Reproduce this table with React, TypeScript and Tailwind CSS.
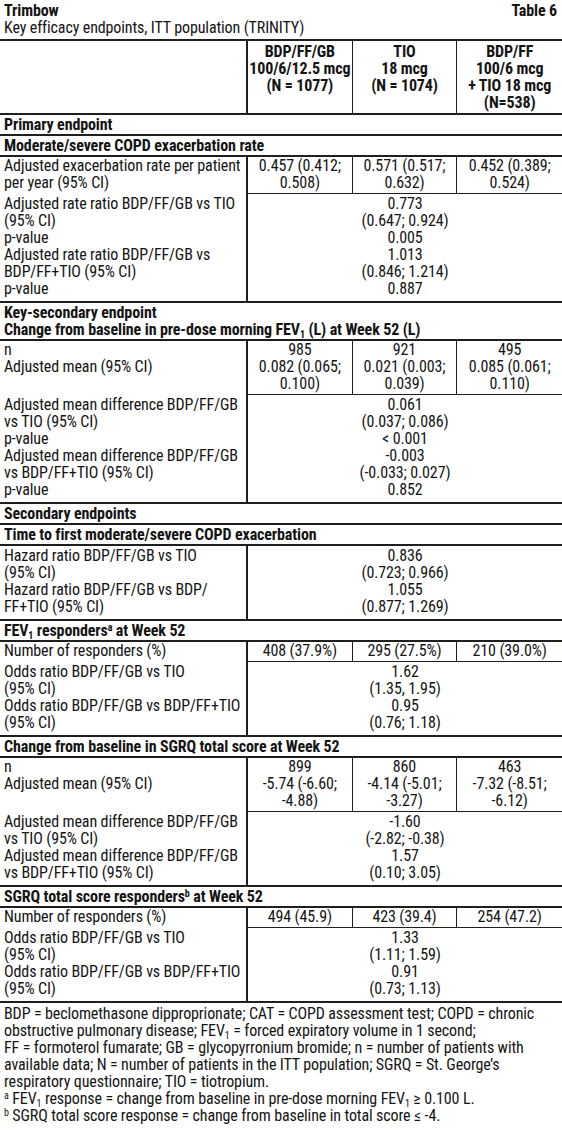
import React from "react";

type Split = { left: React.ReactNode[]; vals: React.ReactNode[][] };
type Merged = { left: React.ReactNode[]; center: React.ReactNode[] };
type Block =
  | { kind: "heading"; lines: React.ReactNode[] }
  | { kind: "data"; split?: Split; merged?: Merged };

const Sub = ({ children }: { children: React.ReactNode }) => (
  <sub className="text-[10px]">{children}</sub>
);
const Sup = ({ children }: { children: React.ReactNode }) => (
  <sup className="text-[10px]">{children}</sup>
);

const FEV = () => (
  <>
    FEV<Sub>1</Sub>
  </>
);

const blocks: Block[] = [
  { kind: "heading", lines: ["Primary endpoint"] },
  { kind: "heading", lines: ["Moderate/severe COPD exacerbation rate"] },
  {
    kind: "data",
    split: {
      left: ["Adjusted exacerbation rate per patient", "per year (95% CI)"],
      vals: [
        ["0.457 (0.412;", "0.508)"],
        ["0.571 (0.517;", "0.632)"],
        ["0.452 (0.389;", "0.524)"],
      ],
    },
    merged: {
      left: [
        "Adjusted rate ratio BDP/FF/GB vs TIO",
        "(95% CI)",
        "p-value",
        "Adjusted rate ratio BDP/FF/GB vs",
        "BDP/FF+TIO (95% CI)",
        "p-value",
      ],
      center: ["0.773", "(0.647; 0.924)", "0.005", "1.013", "(0.846; 1.214)", "0.887"],
    },
  },
  {
    kind: "heading",
    lines: [
      "Key-secondary endpoint",
      <>
        Change from baseline in pre-dose morning <FEV /> (L) at Week 52 (L)
      </>,
    ],
  },
  {
    kind: "data",
    split: {
      left: ["n", "Adjusted mean (95% CI)"],
      vals: [
        ["985", "0.082 (0.065;", "0.100)"],
        ["921", "0.021 (0.003;", "0.039)"],
        ["495", "0.085 (0.061;", "0.110)"],
      ],
    },
    merged: {
      left: [
        "Adjusted mean difference BDP/FF/GB",
        "vs TIO (95% CI)",
        "p-value",
        "Adjusted mean difference BDP/FF/GB",
        "vs BDP/FF+TIO (95% CI)",
        "p-value",
      ],
      center: ["0.061", "(0.037; 0.086)", "< 0.001", "-0.003", "(-0.033; 0.027)", "0.852"],
    },
  },
  { kind: "heading", lines: ["Secondary endpoints"] },
  { kind: "heading", lines: ["Time to first moderate/severe COPD exacerbation"] },
  {
    kind: "data",
    merged: {
      left: [
        "Hazard ratio BDP/FF/GB vs TIO",
        "(95% CI)",
        "Hazard ratio BDP/FF/GB vs BDP/",
        "FF+TIO (95% CI)",
      ],
      center: ["0.836", "(0.723; 0.966)", "1.055", "(0.877; 1.269)"],
    },
  },
  {
    kind: "heading",
    lines: [
      <>
        <FEV /> responders<Sup>a</Sup> at Week 52
      </>,
    ],
  },
  {
    kind: "data",
    split: {
      left: ["Number of responders (%)"],
      vals: [["408 (37.9%)"], ["295 (27.5%)"], ["210 (39.0%)"]],
    },
    merged: {
      left: [
        "Odds ratio BDP/FF/GB vs TIO",
        "(95% CI)",
        "Odds ratio BDP/FF/GB vs BDP/FF+TIO",
        "(95% CI)",
      ],
      center: ["1.62", "(1.35, 1.95)", "0.95", "(0.76; 1.18)"],
    },
  },
  { kind: "heading", lines: ["Change from baseline in SGRQ total score at Week 52"] },
  {
    kind: "data",
    split: {
      left: ["n", "Adjusted mean (95% CI)"],
      vals: [
        ["899", "-5.74 (-6.60;", "-4.88)"],
        ["860", "-4.14 (-5.01;", "-3.27)"],
        ["463", "-7.32 (-8.51;", "-6.12)"],
      ],
    },
    merged: {
      left: [
        "Adjusted mean difference BDP/FF/GB",
        "vs TIO (95% CI)",
        "Adjusted mean difference BDP/FF/GB",
        "vs BDP/FF+TIO (95% CI)",
      ],
      center: ["-1.60", "(-2.82; -0.38)", "1.57", "(0.10; 3.05)"],
    },
  },
  {
    kind: "heading",
    lines: [
      <>
        SGRQ total score responders<Sup>b</Sup> at Week 52
      </>,
    ],
  },
  {
    kind: "data",
    split: {
      left: ["Number of responders (%)"],
      vals: [["494 (45.9)"], ["423 (39.4)"], ["254 (47.2)"]],
    },
    merged: {
      left: [
        "Odds ratio BDP/FF/GB vs TIO",
        "(95% CI)",
        "Odds ratio BDP/FF/GB vs BDP/FF+TIO",
        "(95% CI)",
      ],
      center: ["1.33", "(1.11; 1.59)", "0.91", "(0.73; 1.13)"],
    },
  },
];

function Lines({ lines }: { lines: React.ReactNode[] }) {
  return (
    <>
      {lines.map((l, i) => (
        <div key={i} className="whitespace-nowrap">
          {l}
        </div>
      ))}
    </>
  );
}

function DataBlock({ split, merged }: { split?: Split; merged?: Merged }) {
  return (
    <div className="border-t-2 border-[#1f1f1f]">
      {split && (
        <div className="flex">
          <div className="w-[248px] shrink-0 border-r-2 border-[#1f1f1f] pb-[2px] pl-[4px]">
            <Lines lines={split.left} />
          </div>
          <div className="grid flex-1 grid-cols-3 border-b border-[#1f1f1f]">
            {split.vals.map((v, i) => (
              <div
                key={i}
                className={
                  i < 2
                    ? "border-r border-[#1f1f1f] pb-[2px] text-center"
                    : "pb-[2px] text-center"
                }
              >
                <Lines lines={v} />
              </div>
            ))}
          </div>
        </div>
      )}
      {merged && (
        <div className="flex">
          <div className="w-[248px] shrink-0 border-r-2 border-[#1f1f1f] pb-[4px] pl-[4px] pt-[1px]">
            <Lines lines={merged.left} />
          </div>
          <div className="flex-1 pb-[4px] pt-[1px] text-center">
            <Lines lines={merged.center} />
          </div>
        </div>
      )}
    </div>
  );
}

export default function App() {
  return (
    <div className="w-[562px] bg-white font-['Roboto_Condensed','Liberation_Sans',sans-serif] text-[16px] leading-[17px] tracking-[-0.12px] text-[#141414]">
      <div className="pt-[2px]">
        <div className="flex justify-between pl-[4px] pr-[5px] font-bold">
          <span>Trimbow</span>
          <span>Table 6</span>
        </div>
        <div className="pl-[4px]">Key efficacy endpoints, ITT population (TRINITY)</div>
      </div>
      <div className="mt-[3px] border-b-2 border-[#1f1f1f]">
        <div className="flex border-t-2 border-[#1f1f1f]">
          <div className="w-[248px] shrink-0 border-r-2 border-[#1f1f1f]" />
          <div className="grid flex-1 grid-cols-3 font-bold">
            <div className="border-r border-[#1f1f1f] pb-[2px] pt-[2px] text-center">
              <Lines lines={["BDP/FF/GB", "100/6/12.5 mcg", "(N = 1077)"]} />
            </div>
            <div className="border-r border-[#1f1f1f] pb-[2px] pt-[2px] text-center">
              <Lines lines={["TIO", "18 mcg", "(N = 1074)"]} />
            </div>
            <div className="pb-[2px] pt-[2px] text-center">
              <Lines lines={["BDP/FF", "100/6 mcg", "+ TIO 18 mcg", "(N=538)"]} />
            </div>
          </div>
        </div>
        {blocks.map((b, i) =>
          b.kind === "heading" ? (
            <div
              key={i}
              className="border-t-2 border-[#1f1f1f] pb-[1px] pl-[4px] pt-[1px] font-bold"
            >
              <Lines lines={b.lines} />
            </div>
          ) : (
            <DataBlock key={i} split={b.split} merged={b.merged} />
          )
        )}
      </div>
      <div className="pl-[4px] pt-[2px]">
        <Lines
          lines={[
            "BDP = beclomethasone dipproprionate; CAT = COPD assessment test; COPD = chronic",
            <>
              obstructive pulmonary disease; <FEV /> = forced expiratory volume in 1 second;
            </>,
            "FF = formoterol fumarate; GB = glycopyrronium bromide; n = number of patients with",
            "available data; N = number of patients in the ITT population; SGRQ = St. George\u2019s",
            "respiratory questionnaire; TIO = tiotropium.",
            <>
              <Sup>a</Sup> <FEV /> response = change from baseline in pre-dose morning <FEV /> {"\u2265"} 0.100 L.
            </>,
            <>
              <Sup>b</Sup> SGRQ total score response = change from baseline in total score {"\u2264"} -4.
            </>,
          ]}
        />
      </div>
    </div>
  );
}
